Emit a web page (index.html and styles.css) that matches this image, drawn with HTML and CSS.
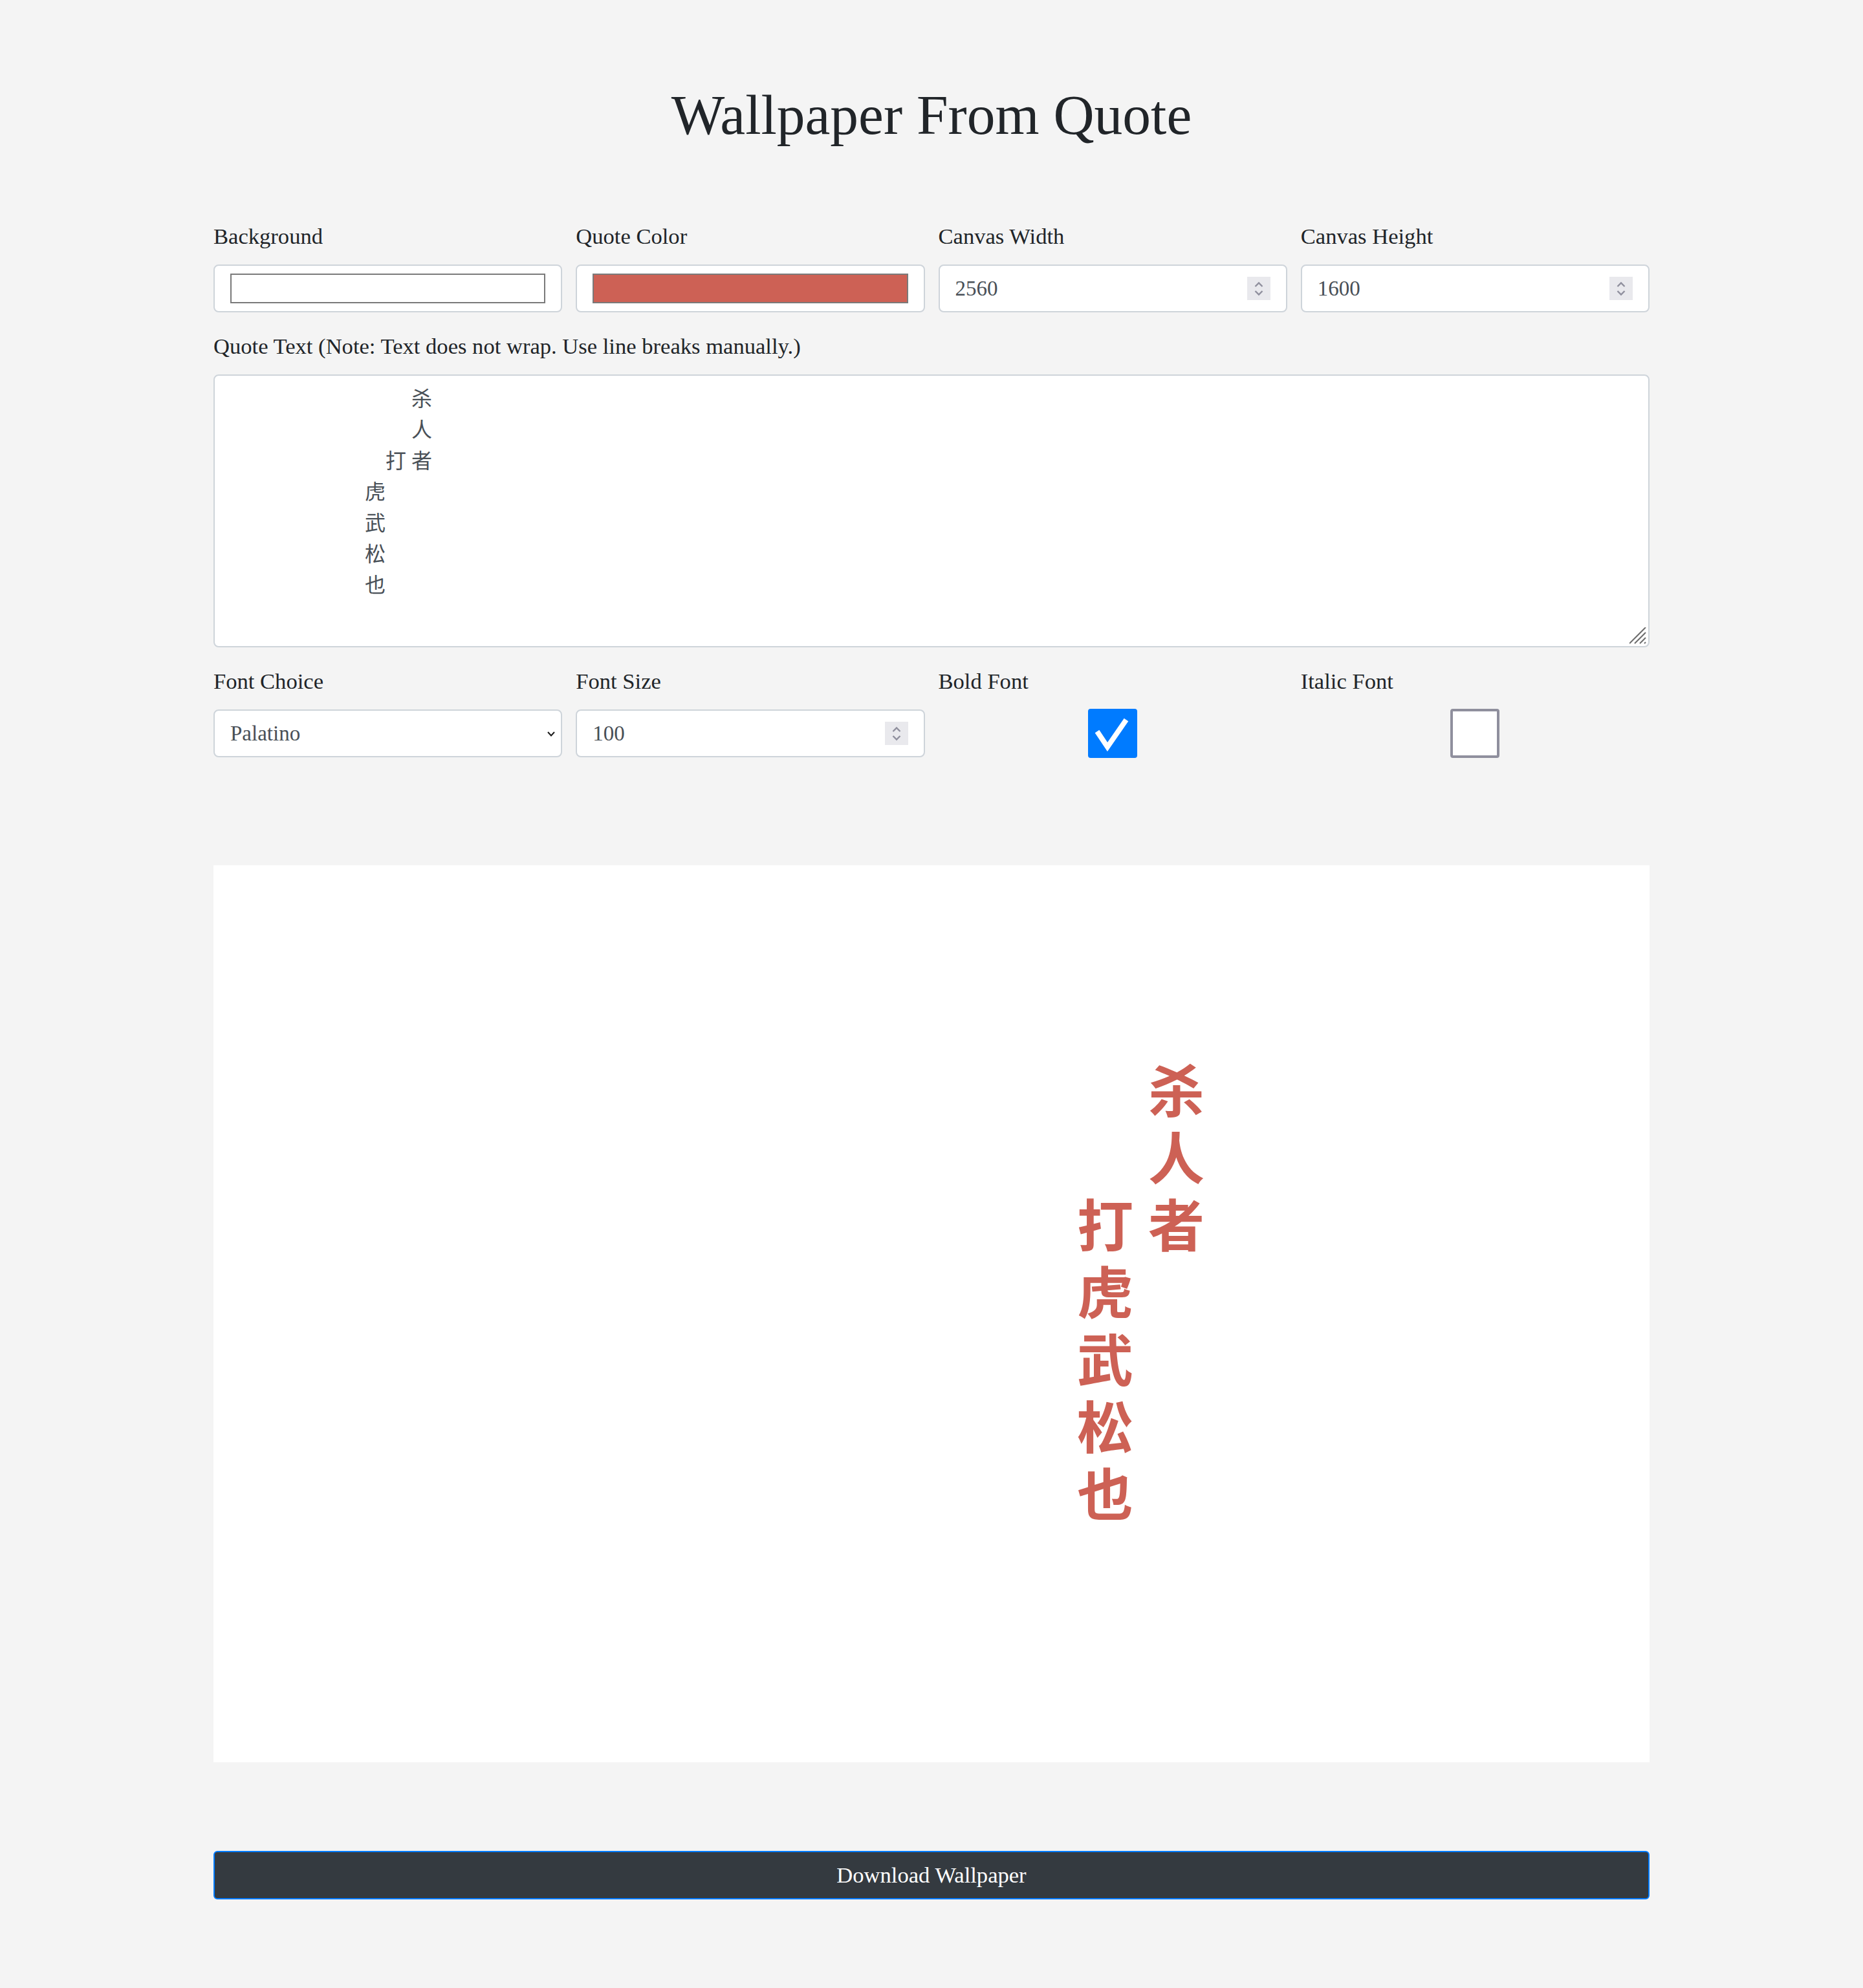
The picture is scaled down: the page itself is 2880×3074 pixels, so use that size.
FILE: index.html
```html
<!DOCTYPE html>
<html lang="en">
<head>
<meta charset="utf-8">
<title>Wallpaper From Quote</title>
<link rel="stylesheet" href="styles.css">
</head>
<body>
<main class="page">
  <h1 class="title">Wallpaper From Quote</h1>

  <section class="grid">
    <div class="field">
      <label class="label" for="bg">Background</label>
      <input class="color-input" id="bg" type="color" value="#ffffff">
    </div>
    <div class="field">
      <label class="label" for="fg">Quote Color</label>
      <input class="color-input" id="fg" type="color" value="#cd6155">
    </div>
    <div class="field">
      <label class="label" for="cw">Canvas Width</label>
      <div class="box">
        <input class="box-input" id="cw" type="number" value="2560">
        <span class="spin"><svg width="36" height="36" viewBox="0 0 36 36"><polyline points="12.5,15 18,9.5 23.5,15" /><polyline points="12.5,22 18,27.5 23.5,22" /></svg></span>
      </div>
    </div>
    <div class="field">
      <label class="label" for="ch">Canvas Height</label>
      <div class="box">
        <input class="box-input" id="ch" type="number" value="1600">
        <span class="spin"><svg width="36" height="36" viewBox="0 0 36 36"><polyline points="12.5,15 18,9.5 23.5,15" /><polyline points="12.5,22 18,27.5 23.5,22" /></svg></span>
      </div>
    </div>
  </section>

  <div class="field text-field">
    <label class="label" for="quote">Quote Text (Note: Text does not wrap. Use line breaks manually.)</label>
    <div class="area-wrap">
      <textarea class="area" id="quote" spellcheck="false">                                   杀
                                   人
                              打 者
                          虎
                          武
                          松
                          也</textarea>
      <svg class="grip" width="28" height="28" viewBox="0 0 28 28"><line x1="0" y1="25" x2="25" y2="0" /><line x1="8" y1="25" x2="25" y2="8" /><line x1="16" y1="25" x2="25" y2="16" /><line x1="23" y1="25" x2="25" y2="23" /></svg>
    </div>
  </div>

  <section class="grid grid-lower">
    <div class="field">
      <label class="label" for="font">Font Choice</label>
      <div class="box">
        <select class="box-input select" id="font">
          <option>Palatino</option>
          <option>Georgia</option>
          <option>Times New Roman</option>
        </select>
        <svg class="caret" width="12" height="8" viewBox="0 0 12 8"><polyline points="1,1 6,6.5 11,1" /></svg>
      </div>
    </div>
    <div class="field">
      <label class="label" for="fs">Font Size</label>
      <div class="box">
        <input class="box-input" id="fs" type="number" value="100">
        <span class="spin"><svg width="36" height="36" viewBox="0 0 36 36"><polyline points="12.5,15 18,9.5 23.5,15" /><polyline points="12.5,22 18,27.5 23.5,22" /></svg></span>
      </div>
    </div>
    <div class="field">
      <label class="label" for="bold">Bold Font</label>
      <div class="check-row">
        <span class="check-wrap">
          <input class="check" id="bold" type="checkbox" checked>
          <svg class="tick" width="76" height="76" viewBox="0 0 76 76"><polyline points="14,35 30,59 59,17" /></svg>
        </span>
      </div>
    </div>
    <div class="field">
      <label class="label" for="italic">Italic Font</label>
      <div class="check-row">
        <span class="check-wrap">
          <input class="check" id="italic" type="checkbox">
        </span>
      </div>
    </div>
  </section>

  <div class="preview">
    <div class="quote">
      <div class="qline"><span class="qc"></span><span class="qc">杀</span></div>
      <div class="qline"><span class="qc"></span><span class="qc">人</span></div>
      <div class="qline"><span class="qc">打</span><span class="qc">者</span></div>
      <div class="qline"><span class="qc">虎</span><span class="qc"></span></div>
      <div class="qline"><span class="qc">武</span><span class="qc"></span></div>
      <div class="qline"><span class="qc">松</span><span class="qc"></span></div>
      <div class="qline"><span class="qc">也</span><span class="qc"></span></div>
    </div>
  </div>

  <button class="download" type="button">Download Wallpaper</button>
</main>
</body>
</html>
```

FILE: styles.css
```css
html, body {
  margin: 0;
  padding: 0;
}

body {
  background: #f4f4f4;
  color: #212529;
  font-family: "Liberation Serif", "Noto Sans CJK SC", serif;
}

.page {
  width: 2220px;
  margin: 0 auto;
  padding-top: 126px;
}

.title {
  margin: 0;
  font-size: 87.5px;
  line-height: 104px;
  font-weight: 400;
  text-align: center;
  color: #212529;
}

.grid {
  display: grid;
  grid-template-columns: repeat(4, 1fr);
  column-gap: 21px;
  margin-top: 109px;
}

.grid-lower {
  margin-top: 26px;
}

.field {
  display: flex;
  flex-direction: column;
  min-width: 0;
}

.text-field {
  margin-top: 26px;
}

.label {
  font-size: 34.6px;
  line-height: 52px;
  margin-bottom: 18px;
  color: #212529;
}

.color-input {
  display: block;
  box-sizing: border-box;
  width: 100%;
  height: 74px;
  margin: 0;
  padding: 12px 24px;
  border: 2px solid #ced4da;
  border-radius: 8px;
  background: #fff;
  cursor: pointer;
}

.color-input::-webkit-color-swatch-wrapper {
  padding: 0;
}

.color-input::-webkit-color-swatch {
  border: 2px solid #7a7a7a;
  border-radius: 0;
}

.box {
  position: relative;
  box-sizing: border-box;
  display: flex;
  align-items: center;
  height: 74px;
  padding: 0 24px;
  border: 2px solid #ced4da;
  border-radius: 8px;
  background: #fff;
}

.box-input {
  flex: 1;
  min-width: 0;
  height: 100%;
  margin: 0;
  padding: 0;
  border: 0;
  outline: none;
  background: transparent;
  font-family: "Liberation Serif", serif;
  font-size: 33px;
  color: #495057;
  -moz-appearance: textfield;
  appearance: textfield;
}

.box-input::-webkit-inner-spin-button,
.box-input::-webkit-outer-spin-button {
  -webkit-appearance: none;
  margin: 0;
}

.select {
  -webkit-appearance: none;
  appearance: none;
}

.spin {
  flex: none;
  width: 36px;
  height: 36px;
  background: #e9e9ed;
  display: flex;
}

.spin polyline {
  fill: none;
  stroke: #8f8f9d;
  stroke-width: 2.4;
}

.caret {
  position: absolute;
  right: 9px;
  top: 32px;
  pointer-events: none;
}

.caret polyline {
  fill: none;
  stroke: #1a1a1a;
  stroke-width: 2;
}

.area-wrap {
  position: relative;
}

.area {
  display: block;
  box-sizing: border-box;
  width: 100%;
  height: 422px;
  margin: 0;
  padding: 12px 24px;
  border: 2px solid #ced4da;
  border-radius: 8px;
  background: #fff;
  color: #495057;
  font-family: "Liberation Serif", "Noto Sans CJK SC", serif;
  font-size: 32px;
  line-height: 48px;
  resize: none;
  outline: none;
  overflow: hidden;
  white-space: pre;
}

.grip {
  position: absolute;
  right: 3px;
  bottom: 3px;
  pointer-events: none;
}

.grip line {
  stroke: #6e6e6e;
  stroke-width: 2;
}

.check-row {
  height: 74px;
  display: flex;
  align-items: center;
  justify-content: center;
}

.check-wrap {
  position: relative;
  width: 76px;
  height: 76px;
  display: block;
}

.check {
  -webkit-appearance: none;
  appearance: none;
  box-sizing: border-box;
  display: block;
  width: 76px;
  height: 76px;
  margin: 0;
  border: 4px solid #8f8f9d;
  border-radius: 4px;
  background: #fff;
}

.check:checked {
  border: 0;
  background: #007bff;
}

.tick {
  position: absolute;
  left: 0;
  top: 0;
  pointer-events: none;
}

.tick polyline {
  fill: none;
  stroke: #fff;
  stroke-width: 8;
}

.preview {
  position: relative;
  margin-top: 167px;
  width: 100%;
  height: 1387px;
  background: #fff;
}

.quote {
  position: absolute;
  left: 1335px;
  top: 300px;
  color: #cd6155;
  font-family: "Liberation Sans", "Noto Sans CJK SC", sans-serif;
  font-weight: 700;
  font-size: 87px;
  line-height: 104px;
}

.qline {
  display: flex;
  height: 104px;
}

.qc {
  width: 110px;
}

.download {
  display: block;
  box-sizing: border-box;
  width: 100%;
  height: 75px;
  margin: 137px 0 0;
  padding: 0;
  border: 2px solid #007bff;
  border-radius: 6px;
  background: #343a40;
  color: #fff;
  font-family: "Liberation Serif", serif;
  font-size: 34.6px;
  cursor: pointer;
}
```
